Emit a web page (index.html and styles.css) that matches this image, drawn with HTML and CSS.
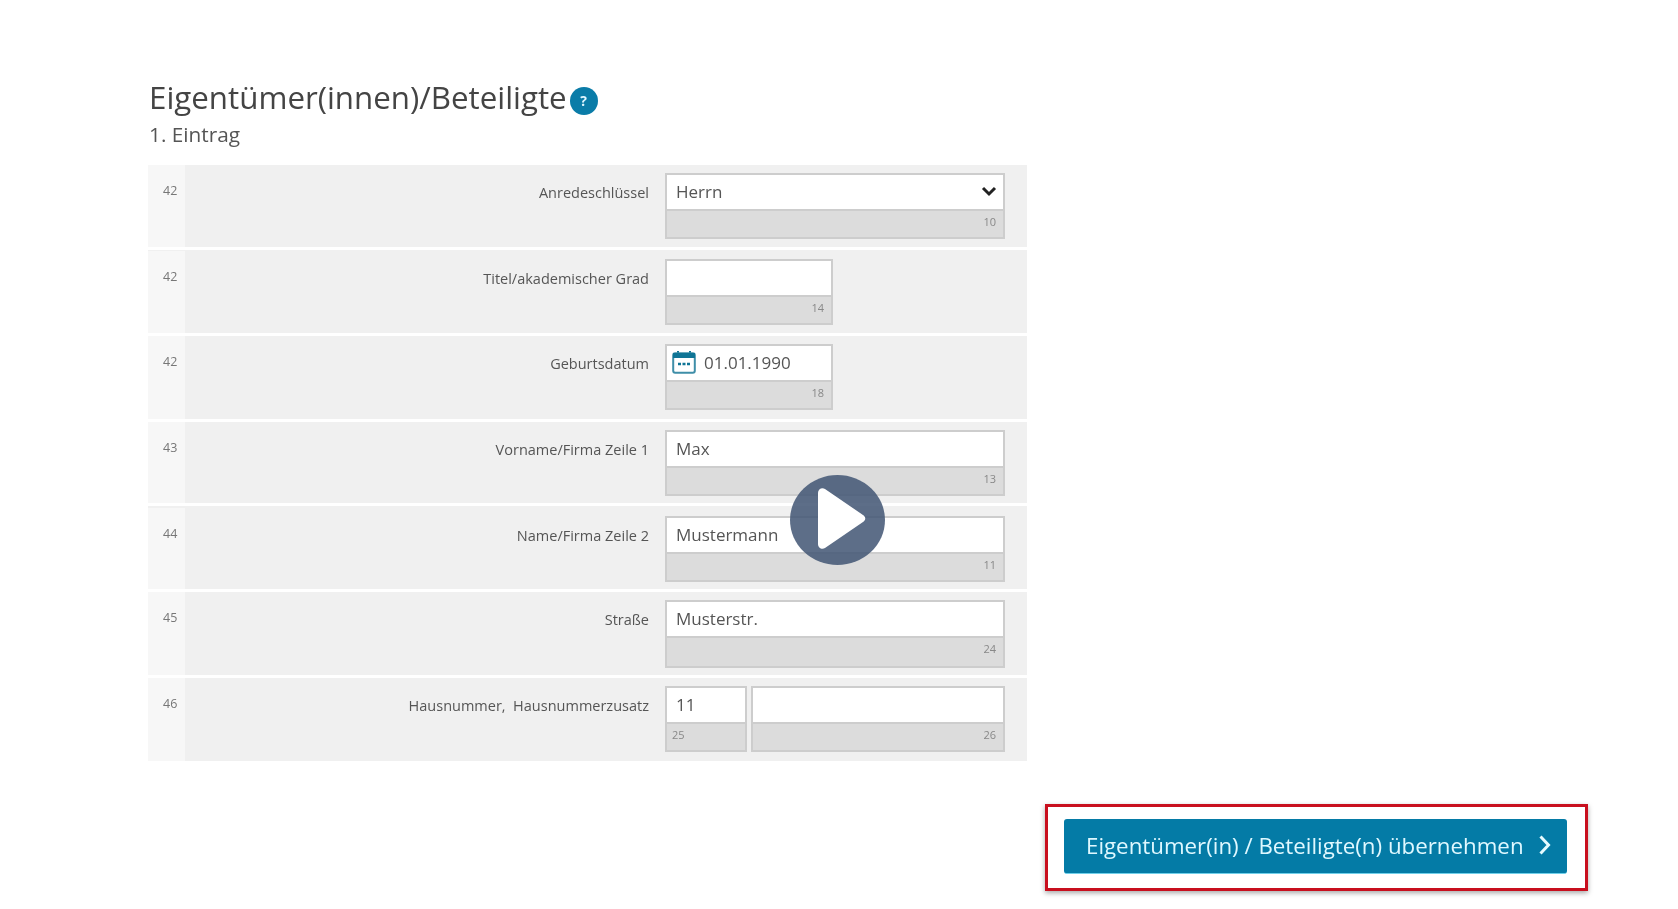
FILE: index.html
```html
<!DOCTYPE html>
<html lang="de">
<head>
<meta charset="utf-8">
<title>Eigentümer(innen)/Beteiligte</title>
<link rel="stylesheet" href="styles.css">
</head>
<body>
<main class="page">
  <h1 class="title">Eigentümer(innen)/Beteiligte<span class="help">?</span></h1>
  <p class="subtitle">1. Eintrag</p>
  <div class="form">
    <div class="row r1">
      <div class="num">42</div>
      <div class="label">Anredeschlüssel</div>
      <div class="fields">
        <div class="field wide">
          <div class="value select">Herrn
            <svg class="chev" viewBox="0 0 16 11" width="16" height="11"><path d="M2 2l6 6 6-6" fill="none" stroke="#222" stroke-width="3"/></svg>
          </div>
          <div class="hint">10</div>
        </div>
      </div>
    </div>
    <div class="row r2">
      <div class="num">42</div>
      <div class="label">Titel/akademischer Grad</div>
      <div class="fields">
        <div class="field short"><div class="value"></div><div class="hint">14</div></div>
      </div>
    </div>
    <div class="row r3">
      <div class="num">42</div>
      <div class="label">Geburtsdatum</div>
      <div class="fields">
        <div class="field short">
          <div class="value date">
            <svg class="cal" viewBox="0 0 24 24" width="24" height="24"><path d="M6 1v3M18 1v3" stroke="#0f7596" stroke-width="2"/><rect x="1.2" y="3.2" width="21.6" height="19.6" rx="2" fill="none" stroke="#3f8ea8" stroke-width="2"/><rect x="1" y="3" width="22" height="5" fill="#0f7596"/><path d="M6 14h3M10.5 14h3M15 14h3" stroke="#0f7596" stroke-width="2.4"/></svg>
            01.01.1990
          </div>
          <div class="hint">18</div>
        </div>
      </div>
    </div>
    <div class="row r4">
      <div class="num">43</div>
      <div class="label">Vorname/Firma Zeile 1</div>
      <div class="fields">
        <div class="field wide"><div class="value">Max</div><div class="hint">13</div></div>
      </div>
    </div>
    <div class="row r5">
      <div class="num">44</div>
      <div class="label">Name/Firma Zeile 2</div>
      <div class="fields">
        <div class="field wide"><div class="value">Mustermann</div><div class="hint">11</div></div>
      </div>
    </div>
    <div class="row r6">
      <div class="num">45</div>
      <div class="label">Straße</div>
      <div class="fields">
        <div class="field wide tall"><div class="value">Musterstr.</div><div class="hint">24</div></div>
      </div>
    </div>
    <div class="row r7">
      <div class="num">46</div>
      <div class="label">Hausnummer,&nbsp; Hausnummerzusatz</div>
      <div class="fields">
        <div class="field house"><div class="value">11</div><div class="hint left">25</div></div>
        <div class="field extra"><div class="value"></div><div class="hint">26</div></div>
      </div>
    </div>
  </div>
  <div class="actions">
    <div class="frame">
      <button class="btn" type="button"><span>Eigentümer(in) / Beteiligte(n) übernehmen</span>
        <svg viewBox="0 0 14 22" width="14" height="22"><path d="M2.5 2.5l8 8.5-8 8.5" fill="none" stroke="#e6fbff" stroke-width="3"/></svg>
      </button>
    </div>
  </div>
</main>
<div class="play">
  <svg viewBox="0 0 95 90" width="95" height="90"><path d="M28 18c0-4 4-6 7-4l38 26c3 2 3 5 0 7L35 73c-3 2-7 0-7-4z" fill="#fff"/></svg>
</div>
</body>
</html>
```
FILE: styles.css
```css
* { box-sizing: border-box; }
html, body { margin: 0; padding: 0; background: #fff; }
body { height: 909px; overflow: hidden; font-family: "Open Sans", sans-serif; color: #444; }
.page { padding: 77px 90px 0 148px; filter: blur(.35px); }
.title { margin: 0; height: 40px; padding-left: 1px; font-size: 31.3px; line-height: 40px; font-weight: 400; color: #444; display: flex; align-items: center; }
.help { width: 28px; height: 28px; margin: 7px 0 0 3px; border-radius: 50%; background: #0a7ca8; color: #dff6ff; font-size: 14px; font-weight: 700; line-height: 28px; text-align: center; }
.subtitle { margin: 3px 0 0; padding-left: 1px; height: 28px; font-size: 20.8px; line-height: 28px; color: #555; }
.form { width: 879px; margin-top: 17px; display: flex; flex-direction: column; gap: 3px; }
.row { display: flex; background: #f0f0f0; }
.r1 { height: 82px; padding-top: 8px; }
.r2 { height: 83px; padding-top: 9px; }
.r3 { height: 83px; padding-top: 8px; }
.r4 { height: 81px; padding-top: 8px; }
.r5 { height: 83px; padding-top: 10px; }
.r6 { height: 83px; padding-top: 8px; }
.r7 { height: 83px; padding-top: 8px; }
.num { width: 37px; margin-top: -8px; padding: 17px 0 0 15px; background: #f7f7f7; font-size: 12.5px; line-height: 17px; color: #777; flex: none; }
.label { width: 464px; flex: none; padding: 10px 0 0; text-align: right; font-size: 14.5px; line-height: 19px; color: #555; }
.fields { display: flex; gap: 4px; margin-left: 16px; }
.field { height: 66px; border: 2px solid #cdcdcd; background: #dcdcdc; display: flex; flex-direction: column; }
.tall { height: 68px; }
.wide { width: 340px; }
.short { width: 168px; }
.house { width: 82px; }
.extra { width: 254px; }
.value { height: 36px; background: #fff; border-bottom: 2px solid #cdcdcd; padding-left: 9px; padding-bottom: 2px; font-size: 17px; color: #555; display: flex; align-items: center; flex: none; }
.select { justify-content: space-between; padding-right: 6px; }
.date { padding-left: 5px; gap: 8px; }
.hint { font-size: 11px; line-height: 14px; padding: 4px 7px 0; text-align: right; color: #888; }
.hint.left { text-align: left; padding-left: 5px; }
.actions { width: 1440px; margin-top: 43px; display: flex; justify-content: flex-end; }
.frame { flex: none; width: 543px; height: 87px; padding: 12px 0 0 16px; border: 3px solid #c80f1e; background: #fff; box-shadow: 0 2px 5px rgba(0,0,0,.35); }
.btn { width: 503px; height: 55px; padding: 0 15px 2px 22px; border: 0; border-bottom: 1px solid #6fd0ea; border-radius: 3px; background: #047ba6; color: #dff8ff; font-family: "Open Sans", sans-serif; font-size: 22.3px; white-space: nowrap; display: flex; align-items: center; justify-content: space-between; }
.play { position: absolute; left: 790px; top: 475px; width: 95px; height: 90px; border-radius: 50%; background: rgba(65,85,115,.85); }
.play svg { display: block; }
```
